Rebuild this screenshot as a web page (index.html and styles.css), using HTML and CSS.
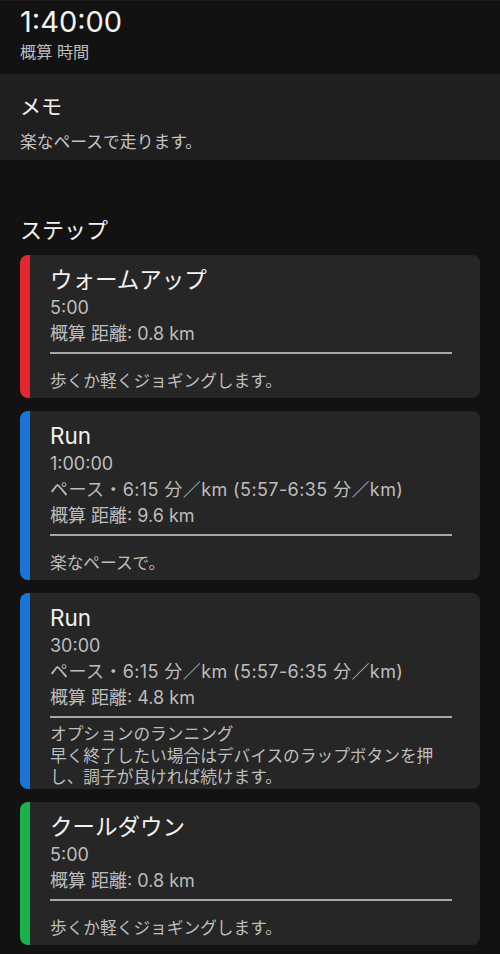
FILE: index.html
```html
<!DOCTYPE html>
<html lang="ja">
<head>
    <meta charset="UTF-8">
    <meta name="viewport" content="width=device-width, initial-scale=1.0">
    <title>ワークアウト</title>
    <link rel="stylesheet" href="styles.css">
</head>
<body>

    <!-- Summary -->
    <header class="summary">
        <div class="summary-time">1:40:00</div>
        <div class="summary-label">概算 時間</div>
    </header>

    <!-- Memo -->
    <section class="memo">
        <h2 class="memo-title">メモ</h2>
        <p class="memo-text">楽なペースで走ります。</p>
    </section>

    <!-- Steps -->
    <section class="steps">
        <h2 class="steps-title">ステップ</h2>

        <div class="step step-warmup">
            <div class="step-name">ウォームアップ</div>
            <div class="step-line">5:00</div>
            <div class="step-line">概算 距離: 0.8 km</div>
            <div class="step-divider"></div>
            <div class="step-note">歩くか軽くジョギングします。</div>
        </div>

        <div class="step step-run">
            <div class="step-name">Run</div>
            <div class="step-line">1:00:00</div>
            <div class="step-line step-pace">ペース・6:15 分／km (5:57-6:35 分／km)</div>
            <div class="step-line">概算 距離: 9.6 km</div>
            <div class="step-divider"></div>
            <div class="step-note">楽なペースで。</div>
        </div>

        <div class="step step-run step-long">
            <div class="step-name">Run</div>
            <div class="step-line">30:00</div>
            <div class="step-line step-pace">ペース・6:15 分／km (5:57-6:35 分／km)</div>
            <div class="step-line">概算 距離: 4.8 km</div>
            <div class="step-divider"></div>
            <div class="step-note">オプションのランニング<br>早く終了したい場合はデバイスのラップボタンを押し、調子が良ければ続けます。</div>
        </div>

        <div class="step step-cooldown">
            <div class="step-name">クールダウン</div>
            <div class="step-line">5:00</div>
            <div class="step-line">概算 距離: 0.8 km</div>
            <div class="step-divider"></div>
            <div class="step-note">歩くか軽くジョギングします。</div>
        </div>
    </section>

</body>
</html>
```

FILE: styles.css
```css
body {
    margin: 0;
    background: #121212;
    color: #f2f2f2;
    font-family: Inter, "Noto Sans CJK JP", sans-serif;
}
h2, p {
    margin: 0;
    font-weight: normal;
}
.summary {
    padding: 4px 20px 11px;
    border-top: 1px solid #1e1e1e;
}
.summary-time {
    font-size: 29px;
    line-height: 34px;
}
.summary-label {
    margin-top: 2px;
    font-size: 16.2px;
    line-height: 22px;
    color: #bdbdbd;
}
.memo {
    background: #1f1f1f;
    padding: 19px 20px 7px;
}
.memo-title {
    font-size: 21px;
    line-height: 28px;
}
.memo-text {
    margin-top: 10px;
    font-size: 16.8px;
    line-height: 22px;
    color: #c4c4c4;
}
.steps {
    padding: 56px 20px 0;
}
.steps-title {
    font-size: 22px;
    line-height: 28px;
    margin-bottom: 11px;
}
.step {
    background: #262626;
    border-radius: 8px;
    border-left: 10px solid #888;
    padding: 10px 28px 6px 20px;
    margin-bottom: 13px;
}
.step-warmup {
    border-left-color: #e0282e;
}
.step-run {
    border-left-color: #1b74d8;
}
.step-cooldown {
    border-left-color: #1bb14b;
}
.step-name {
    font-size: 22.5px;
    line-height: 30px;
}
.step-line {
    font-size: 18px;
    line-height: 26px;
    color: #bdbdbd;
}
.step-pace {
    letter-spacing: 0.4px;
}
.step-divider {
    height: 2px;
    margin-top: 5px;
    background: #a8a8a8;
}
.step-note {
    margin-top: 16px;
    font-size: 16.7px;
    line-height: 22px;
    color: #bdbdbd;
}
.step-long {
    padding-bottom: 0;
}
.step-long .step-note {
    margin-top: 6px;
    line-height: 21.5px;
}
```
